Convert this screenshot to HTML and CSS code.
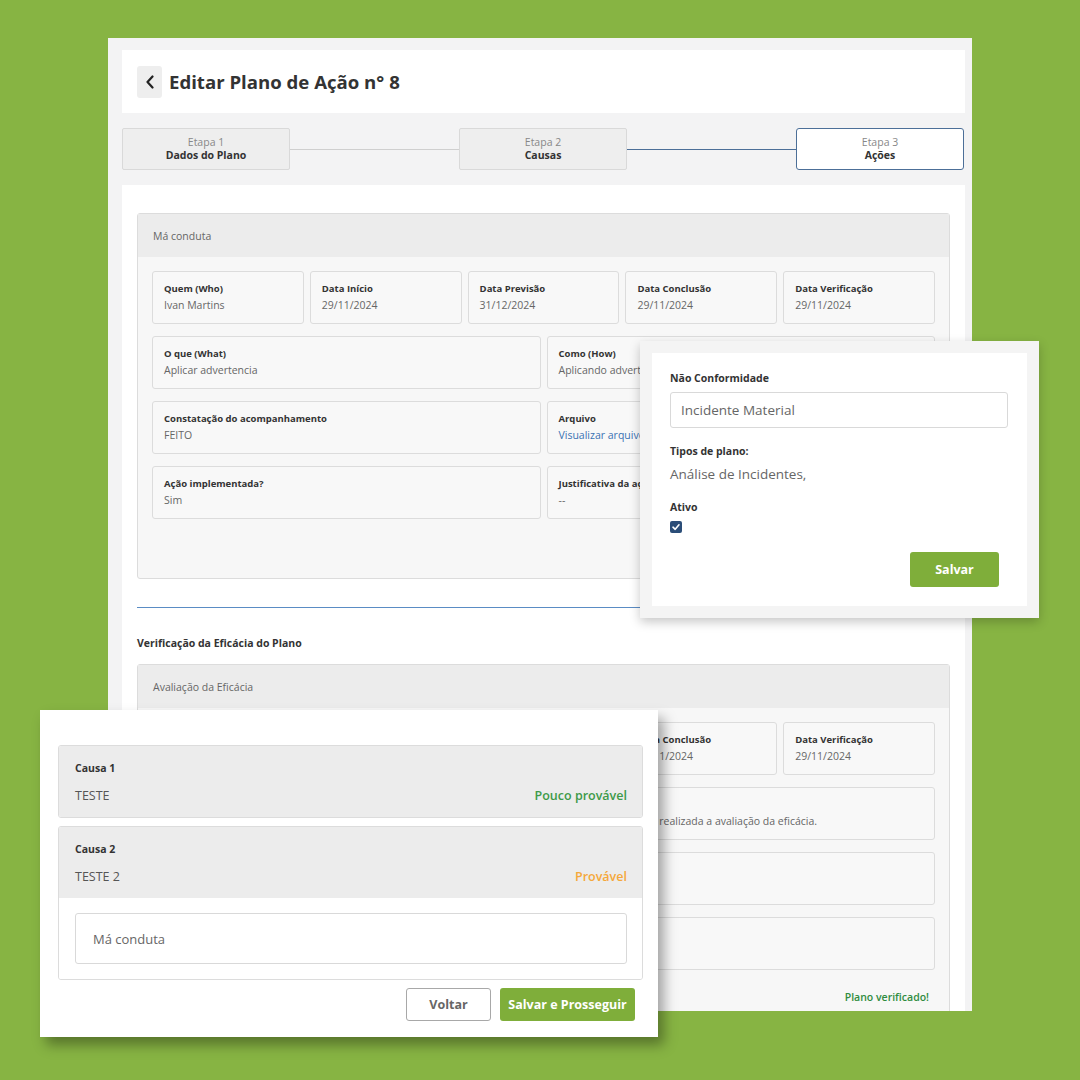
FILE: index.html
```html
<!DOCTYPE html>
<html lang="pt-BR">
<head>
    <meta charset="UTF-8">
    <meta name="viewport" content="width=device-width, initial-scale=1.0">
    <title>Editar Plano de Ação</title>
    <link rel="stylesheet" href="styles.css">
</head>
<body>
    <div class="window">
        <div class="page-header">
            <button type="button" class="back-btn">
                <svg width="10" height="14" viewBox="0 0 10 14"><polyline points="7.5,1.5 2.5,7 7.5,12.5" fill="none" stroke="#222" stroke-width="2.2" stroke-linecap="round" stroke-linejoin="round"/></svg>
            </button>
            <h1>Editar Plano de Ação n° 8</h1>
        </div>

        <div class="stepper">
            <div class="step">
                <span class="step-num">Etapa 1</span>
                <span class="step-name">Dados do Plano</span>
            </div>
            <div class="step-line"></div>
            <div class="step">
                <span class="step-num">Etapa 2</span>
                <span class="step-name">Causas</span>
            </div>
            <div class="step-line active"></div>
            <div class="step active">
                <span class="step-num">Etapa 3</span>
                <span class="step-name">Ações</span>
            </div>
        </div>

        <div class="panel">
            <div class="card">
                <div class="card-header">Má conduta</div>
                <div class="card-body tall">
                    <div class="row cols-5">
                        <div class="field"><label>Quem (Who)</label><span>Ivan Martins</span></div>
                        <div class="field"><label>Data Início</label><span>29/11/2024</span></div>
                        <div class="field"><label>Data Previsão</label><span>31/12/2024</span></div>
                        <div class="field"><label>Data Conclusão</label><span>29/11/2024</span></div>
                        <div class="field"><label>Data Verificação</label><span>29/11/2024</span></div>
                    </div>
                    <div class="row cols-2">
                        <div class="field"><label>O que (What)</label><span>Aplicar advertencia</span></div>
                        <div class="field"><label>Como (How)</label><span>Aplicando advertencia</span></div>
                    </div>
                    <div class="row cols-2">
                        <div class="field"><label>Constatação do acompanhamento</label><span>FEITO</span></div>
                        <div class="field"><label>Arquivo</label><a href="#">Visualizar arquivo</a></div>
                    </div>
                    <div class="row cols-2">
                        <div class="field"><label>Ação implementada?</label><span>Sim</span></div>
                        <div class="field"><label>Justificativa da ação</label><span>--</span></div>
                    </div>
                </div>
            </div>

            <div class="divider"></div>

            <h3 class="section-title">Verificação da Eficácia do Plano</h3>

            <div class="card">
                <div class="card-header">Avaliação da Eficácia</div>
                <div class="card-body">
                    <div class="row cols-5">
                        <div class="field"><label>Quem (Who)</label><span>Ivan Martins</span></div>
                        <div class="field"><label>Data Início</label><span>29/11/2024</span></div>
                        <div class="field"><label>Data Previsão</label><span>31/12/2024</span></div>
                        <div class="field"><label>Data Conclusão</label><span>29/11/2024</span></div>
                        <div class="field"><label>Data Verificação</label><span>29/11/2024</span></div>
                    </div>
                    <div class="row cols-2">
                        <div class="field"></div>
                        <div class="field"><label></label><span>Plano verificado. Foi realizada a avaliação da eficácia.</span></div>
                    </div>
                    <div class="row cols-2">
                        <div class="field"></div>
                        <div class="field"></div>
                    </div>
                    <div class="row cols-2">
                        <div class="field"></div>
                        <div class="field"></div>
                    </div>
                    <p class="verified">Plano verificado!</p>
                </div>
            </div>
        </div>
    </div>

    <div class="popup popup-nc">
        <div class="popup-inner">
            <label class="form-label">Não Conformidade</label>
            <div class="input">Incidente Material</div>
            <label class="form-label">Tipos de plano:</label>
            <p class="plain">Análise de Incidentes,</p>
            <label class="form-label">Ativo</label>
            <span class="checkbox">
                <svg width="10" height="10" viewBox="0 0 10 10"><polyline points="2,5.2 4.2,7.3 8,2.8" fill="none" stroke="#fff" stroke-width="1.6" stroke-linecap="round" stroke-linejoin="round"/></svg>
            </span>
            <div class="popup-actions">
                <button type="button" class="btn btn-green btn-save">Salvar</button>
            </div>
        </div>
    </div>

    <div class="popup popup-causes">
        <div class="cause">
            <div class="cause-head">
                <strong>Causa 1</strong>
                <div class="cause-row">
                    <span>TESTE</span>
                    <span class="prob low">Pouco provável</span>
                </div>
            </div>
        </div>
        <div class="cause">
            <div class="cause-head">
                <strong>Causa 2</strong>
                <div class="cause-row">
                    <span>TESTE 2</span>
                    <span class="prob mid">Provável</span>
                </div>
            </div>
            <div class="cause-body">
                <div class="input big">Má conduta</div>
            </div>
        </div>
        <div class="cause-actions">
            <button type="button" class="btn btn-outline">Voltar</button>
            <button type="button" class="btn btn-green">Salvar e Prosseguir</button>
        </div>
    </div>
</body>
</html>
```

FILE: styles.css
```css
body {
    margin: 0;
    width: 1080px;
    height: 1080px;
    overflow: hidden;
    position: relative;
    background-color: #87b443;
    font-family: "Open Sans", Arial, sans-serif;
    color: #333;
}
.window {
    position: absolute;
    left: 108px;
    top: 38px;
    width: 864px;
    height: 973px;
    overflow: hidden;
    background-color: #f3f3f4;
    padding: 12px 7px 0 14px;
    box-sizing: border-box;
}
.page-header {
    background-color: white;
    height: 63px;
    display: flex;
    align-items: center;
    padding-left: 15px;
}
.back-btn {
    width: 25px;
    height: 32px;
    border: none;
    border-radius: 3px;
    background-color: #eeeeee;
    display: flex;
    align-items: center;
    justify-content: center;
    padding: 0;
}
h1 {
    margin: 0 0 0 7px;
    font-size: 18.6px;
    font-weight: 700;
    color: #333;
}
.stepper {
    display: flex;
    align-items: center;
    padding: 15px 1px 15px 0;
}
.step {
    width: 168px;
    height: 42px;
    box-sizing: border-box;
    background-color: #eeeeee;
    border: 1px solid #d9d9d9;
    border-radius: 2px;
    display: flex;
    flex-direction: column;
    align-items: center;
    justify-content: center;
    font-size: 10.5px;
    line-height: 13px;
}
.step.active {
    background-color: white;
    border-color: #4c6f98;
    border-radius: 3px;
}
.step-num {
    color: #888;
}
.step-name {
    font-weight: 700;
    color: #333;
}
.step-line {
    flex: 1;
    height: 1px;
    background-color: #cfcfcf;
}
.step-line.active {
    background-color: #4c6f98;
}
.panel {
    background-color: white;
    padding: 28px 15px 0 15px;
    height: 900px;
}
.card {
    border: 1px solid #dcdcdc;
    border-radius: 3px;
    background-color: #f7f7f7;
}
.card-header {
    height: 43px;
    display: flex;
    align-items: center;
    padding-left: 15px;
    background-color: #ececec;
    font-size: 10.5px;
    color: #666;
}
.card-body {
    padding: 14px 14px 12px 14px;
    display: flex;
    flex-direction: column;
    gap: 12px;
}
.card-body.tall {
    padding-bottom: 59px;
}
.row {
    display: grid;
    gap: 6px;
}
.cols-5 {
    grid-template-columns: repeat(5, 1fr);
}
.cols-2 {
    grid-template-columns: 1fr 1fr;
}
.field {
    height: 53px;
    box-sizing: border-box;
    background-color: #f8f8f8;
    border: 1px solid #dcdcdc;
    border-radius: 3px;
    padding: 10px 11px;
    display: flex;
    flex-direction: column;
    gap: 3px;
    font-size: 10.5px;
    white-space: nowrap;
    overflow: hidden;
}
.field label {
    font-weight: 700;
    font-size: 9.5px;
    color: #333;
    min-height: 13px;
}
.field span {
    color: #666;
}
.field a {
    color: #3a72b3;
    text-decoration: none;
}
.divider {
    height: 1px;
    background-color: #5a8cc4;
    margin-top: 28px;
}
.section-title {
    font-size: 10.5px;
    font-weight: 700;
    margin: 28px 0 14px 0;
}
.verified {
    margin: 8px 0 0 0;
    text-align: right;
    font-size: 10.5px;
    font-weight: 600;
    color: #2f8c3f;
    padding-right: 6px;
}
.popup {
    position: absolute;
    box-sizing: border-box;
}
.popup-nc {
    left: 640px;
    top: 341px;
    width: 399px;
    height: 277px;
    background-color: #f4f4f4;
    padding: 12px;
    box-shadow: 0 4px 10px rgba(0, 0, 0, 0.22);
}
.popup-inner {
    background-color: white;
    height: 100%;
    box-sizing: border-box;
    padding: 18px 19px 0 18px;
    display: flex;
    flex-direction: column;
}
.form-label {
    font-size: 10.5px;
    font-weight: 700;
    color: #333;
    margin-bottom: 7px;
}
.input {
    height: 36px;
    box-sizing: border-box;
    border: 1px solid #d9d9d9;
    border-radius: 3px;
    display: flex;
    align-items: center;
    padding-left: 10px;
    font-size: 13.5px;
    color: #666;
    margin-bottom: 16px;
}
.plain {
    margin: 0 0 17px 0;
    font-size: 13.5px;
    color: #666;
}
.checkbox {
    width: 12px;
    height: 12px;
    border-radius: 2px;
    background-color: #2b4d78;
    display: flex;
    align-items: center;
    justify-content: center;
}
.popup-actions {
    display: flex;
    justify-content: flex-end;
    padding-right: 9px;
    margin-top: 19px;
}
.btn {
    height: 34px;
    border-radius: 3px;
    font-family: inherit;
    font-size: 12.5px;
    font-weight: 700;
    cursor: pointer;
    padding: 0;
}
.btn-green {
    background-color: #7fae3a;
    color: white;
    border: none;
}
.btn-save {
    width: 89px;
    height: 35px;
}
.btn-outline {
    background-color: white;
    color: #666;
    border: 1px solid #a8a8a8;
    width: 85px;
}
.popup-causes {
    left: 40px;
    top: 710px;
    width: 618px;
    height: 327px;
    background-color: white;
    padding: 35px 15px 15px 18px;
    box-shadow: 6px 8px 12px rgba(0, 0, 0, 0.35);
    display: flex;
    flex-direction: column;
    gap: 8px;
}
.cause {
    border: 1px solid #dcdcdc;
    border-radius: 3px;
    overflow: hidden;
}
.cause-head {
    background-color: #ececec;
    padding: 15px 15px 13px 16px;
    display: flex;
    flex-direction: column;
    gap: 12px;
}
.cause-head strong {
    font-size: 10.5px;
    color: #333;
}
.cause-row {
    display: flex;
    justify-content: space-between;
    font-size: 12.5px;
    color: #555;
}
.prob {
    font-weight: 600;
}
.prob.low {
    color: #3d9a48;
}
.prob.mid {
    color: #f5a83a;
}
.cause-body {
    background-color: white;
    padding: 15px 15px 15px 16px;
}
.input.big {
    height: 51px;
    margin: 0;
    padding-left: 17px;
    font-size: 13px;
}
.cause-actions {
    display: flex;
    justify-content: flex-end;
    gap: 9px;
    padding-right: 8px;
}
.btn-outline + .btn-green {
    width: 135px;
    height: 33px;
}
.cause-actions .btn-outline {
    height: 33px;
}
```
